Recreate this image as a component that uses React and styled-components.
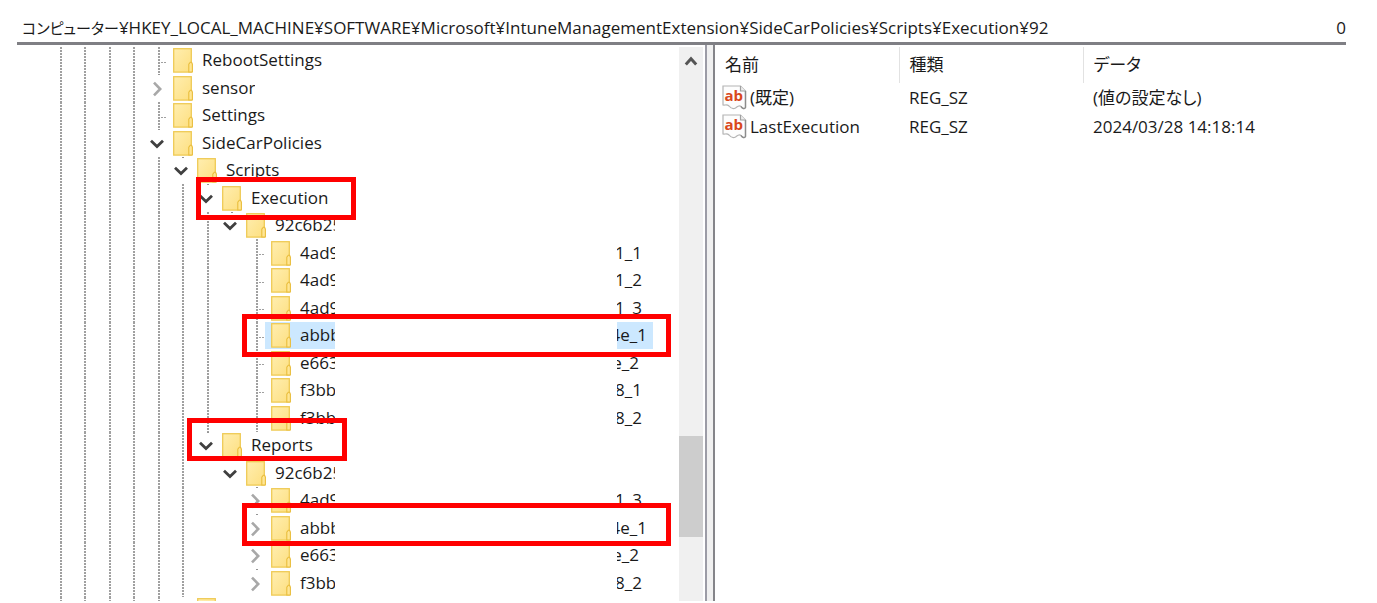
import React, { useState } from "react";
import styled, { createGlobalStyle } from "styled-components";

const TREE = [
  { level: 4, lines: 4, name: "RebootSettings" },
  { level: 4, lines: 4, name: "sensor", toggle: "closed" },
  { level: 4, lines: 4, name: "Settings" },
  { level: 4, lines: 4, name: "SideCarPolicies", toggle: "open" },
  { level: 5, lines: 5, name: "Scripts", toggle: "open" },
  { level: 6, lines: 6, name: "Execution", toggle: "open" },
  { level: 7, lines: 7, name: "92c6b25", toggle: "open", hidden: true },
  { level: 8, lines: 7, name: "4ad9", hidden: true, tail: "1_1" },
  { level: 8, lines: 7, name: "4ad9", hidden: true, tail: "1_2" },
  { level: 8, lines: 7, name: "4ad9", hidden: true, tail: "1_3" },
  { level: 8, lines: 7, name: "abbb", hidden: true, tail: "4e_1", selected: true },
  { level: 8, lines: 7, name: "e663", hidden: true, tail: "e_2" },
  { level: 8, lines: 7, name: "f3bb", hidden: true, tail: "8_1" },
  { level: 8, lines: 7, name: "f3bb", hidden: true, tail: "8_2" },
  { level: 6, lines: 6, name: "Reports", toggle: "open" },
  { level: 7, lines: 6, name: "92c6b25", toggle: "open", hidden: true },
  { level: 8, lines: 6, name: "4ad9", toggle: "closed", hidden: true, tail: "1_3" },
  { level: 8, lines: 6, name: "abbb", toggle: "closed", hidden: true, tail: "4e_1" },
  { level: 8, lines: 6, name: "e663", toggle: "closed", hidden: true, tail: "e_2" },
  { level: 8, lines: 6, name: "f3bb", toggle: "closed", hidden: true, tail: "8_2" },
  { level: 5, lines: 5, name: "", toggle: "none" },
];

const TAIL_WIDTHS = { "4e_1": 30, e_2: 22 };

const VALUES = [
  { name: "(既定)", type: "REG_SZ", data: "(値の設定なし)" },
  { name: "LastExecution", type: "REG_SZ", data: "2024/03/28 14:18:14" },
];

const FolderIcon = () => (
  <svg width="20" height="25" viewBox="0 0 20 25" aria-hidden="true">
    <defs>
      <linearGradient id="folder" x1="0" y1="0" x2="1" y2="1">
        <stop offset="0" stopColor="#ffeeb0" />
        <stop offset="1" stopColor="#fddf80" />
      </linearGradient>
    </defs>
    <rect x="0.7" y="0.7" width="17.6" height="23.4" fill="url(#folder)" stroke="#efca55" strokeWidth="1.3" />
    <path d="M15.8 24V16.2L17.3 14.2H18.6L19.4 16.2V24Z" fill="#ffe694" stroke="#e9bd3c" strokeWidth="1.1" />
  </svg>
);

const ToggleIcon = ({ open }) => (
  <svg width="16" height="16" viewBox="0 0 16 16" fill="none" aria-hidden="true">
    {open ? (
      <path d="M2 4.8L8 10.6L14 4.8" stroke="#404040" strokeWidth="2.8" />
    ) : (
      <path d="M5 1.6L11.2 8L5 14.4" stroke="#a8a8a8" strokeWidth="2.6" />
    )}
  </svg>
);

const StringIcon = () => (
  <svg width="25" height="25" viewBox="0 0 25 25" aria-hidden="true">
    <path
      d="M1 20V1H18.5L23.5 6V22.5C22.5 24.5 20.5 23.5 19 21.5C17 19.5 15 22 13.5 23C11 24.5 9 23.5 7 21C5 19 3 20.5 1 20Z"
      fill="#fdfdfd"
      stroke="#b4b4b4"
      strokeWidth="1.2"
    />
    <path d="M18.5 1V6H23.5" fill="#eee" stroke="#a0a0a0" strokeWidth="1.2" />
    <path d="M23.5 6V22.5C22.5 24.5 20.5 23.5 19 21.5" fill="none" stroke="#8c8c8c" strokeWidth="1.4" />
    <text x="2.5" y="15.5" fontFamily="Open Sans, sans-serif" fontSize="15" fontWeight="700" fill="#d9481c">
      ab
    </text>
  </svg>
);

const TreeRow = ({ item, onToggle }) => {
  const { level, lines, name, toggle, hidden, tail, selected } = item;
  return (
    <Row role="treeitem" aria-selected={!!selected}>
      {Array.from({ length: level }, (_, i) => (
        <Guide key={i} $line={i < lines} />
      ))}
      {toggle === "none" && <Branch />}
      {!toggle && <Branch $connector />}
      {(toggle === "open" || toggle === "closed") && (
        <Toggle type="button" aria-label={name} onClick={onToggle}>
          <ToggleIcon open={toggle === "open"} />
        </Toggle>
      )}
      <Label $selected={selected} $width={hidden ? (level === 8 ? 70 : 95) : null}>
        <FolderIcon />
        <Name>{name}</Name>
      </Label>
      {tail && (
        <Tail $selected={selected} $width={TAIL_WIDTHS[tail] || 25}>
          <Name>{tail}</Name>
        </Tail>
      )}
    </Row>
  );
};

const App = () => {
  const [items, setItems] = useState(TREE);

  const handleToggle = (index) => {
    setItems(
      items.map((item, i) =>
        i === index
          ? { ...item, toggle: item.toggle === "open" ? "closed" : "open" }
          : item
      )
    );
  };

  return (
    <>
      <GlobalStyle />
      <Window>
        <AddressBar>
          <AddressLabel htmlFor="address">コンピューター</AddressLabel>
          <AddressInput
            id="address"
            defaultValue="¥HKEY_LOCAL_MACHINE¥SOFTWARE¥Microsoft¥IntuneManagementExtension¥SideCarPolicies¥Scripts¥Execution¥92"
          />
          <AddressEnd>0</AddressEnd>
        </AddressBar>
        <Panes>
          <TreePane>
            <Tree role="tree">
              {items.map((item, i) => (
                <TreeRow key={i} item={item} onToggle={() => handleToggle(i)} />
              ))}
            </Tree>
            <Scrollbar>
              <ScrollButton type="button" aria-label="上へ">
                <svg width="14" height="12" viewBox="0 0 14 12" fill="none">
                  <path d="M1.8 9.4L7 3.8L12.2 9.4" stroke="#555" strokeWidth="3" />
                </svg>
              </ScrollButton>
              <Thumb />
            </Scrollbar>
            <Mark $left={179} $top={132} $width={160} />
            <Mark $left={225} $top={269} $width={429} />
            <Mark $left={170} $top={373} $width={160} />
            <Mark $left={225} $top={458} $width={429} />
          </TreePane>
          <Splitter />
          <ValuePane>
            <ValueTable>
              <colgroup>
                <ValueCol />
                <ValueCol />
                <col />
              </colgroup>
              <thead>
                <tr>
                  <HeadCell>名前</HeadCell>
                  <HeadCell>種類</HeadCell>
                  <HeadCell>データ</HeadCell>
                </tr>
              </thead>
              <tbody>
                {VALUES.map((value) => (
                  <tr key={value.name}>
                    <Cell>
                      <ValueName>
                        <StringIcon />
                        {value.name}
                      </ValueName>
                    </Cell>
                    <Cell>{value.type}</Cell>
                    <Cell>{value.data}</Cell>
                  </tr>
                ))}
              </tbody>
            </ValueTable>
          </ValuePane>
        </Panes>
      </Window>
    </>
  );
};

export default App;

const GlobalStyle = createGlobalStyle`
  * {
    box-sizing: border-box;
  }

  body {
    margin: 0;
    background: #fff;
    color: #1a1a1a;
    font-family: "Open Sans", "Noto Sans CJK JP", sans-serif;
    font-size: 17px;
    font-feature-settings: "palt";
  }

  button,
  input {
    font: inherit;
    color: inherit;
    border: none;
    padding: 0;
    background: none;
  }
`;

const Window = styled.div`
  display: flex;
  flex-direction: column;
  height: 100vh;
  padding: 14px 31px 2px 17px;
  overflow: hidden;
`;

const AddressBar = styled.div`
  display: flex;
  align-items: center;
  height: 28px;
  padding: 0 0 2px 5px;
`;

const AddressLabel = styled.label`
  font-size: 15px;
  white-space: nowrap;
`;

const AddressInput = styled.input`
  flex: 0 1 944px;
  min-width: 0;
  height: 26px;
  outline: none;
`;

const AddressEnd = styled.span`
  margin-left: auto;
`;

const Panes = styled.div`
  display: flex;
  flex: 1;
  min-height: 0;
  border-top: 3px solid #7f7f84;
`;

const TreePane = styled.div`
  position: relative;
  display: flex;
  flex: 0 0 690px;
  padding: 2px 2px 0 31px;
  border-right: 2px solid #9c9ca6;
  overflow: hidden;
`;

const Tree = styled.ul`
  flex: 1;
  display: grid;
  grid-auto-rows: 27px 28px;
  margin: 0;
  padding: 0;
  list-style: none;
`;

const Row = styled.li`
  display: flex;
  white-space: nowrap;
`;

const dots = "#a0a0a0 0 2px, transparent 2px 3px";

const Guide = styled.span`
  flex: none;
  width: 24px;
  background: ${({ $line }) =>
    $line
      ? `repeating-linear-gradient(${dots}) 12px 0 / 2px 100% no-repeat`
      : "none"};

  &:nth-child(even) {
    width: 25px;
  }
`;

const Branch = styled.span`
  flex: none;
  width: 21px;
  background: ${({ $connector }) =>
    $connector
      ? `repeating-linear-gradient(${dots}) 12px 0 / 2px 100% no-repeat,
         repeating-linear-gradient(90deg, ${dots}) 12px 15px / 9px 1px no-repeat`
      : "none"};
`;

const Toggle = styled.button`
  flex: none;
  display: flex;
  align-items: center;
  width: 21px;
  padding: 1px 0 0 3px;
  background: linear-gradient(#949494, #949494) 12px 0 / 2px 1px no-repeat;
  cursor: pointer;
`;

const Label = styled.span`
  display: flex;
  align-items: center;
  flex: none;
  gap: 9px;
  width: ${({ $width }) => ($width ? `${$width}px` : "auto")};
  padding-left: 6px;
  overflow: hidden;
  background: ${({ $selected }) => ($selected ? "#cce8ff" : "none")};

  svg {
    flex: none;
  }
`;

const Name = styled.span`
  padding-bottom: 2px;
`;

const Tail = styled.span`
  display: flex;
  align-items: center;
  justify-content: flex-end;
  box-sizing: content-box;
  width: ${({ $width }) => $width}px;
  margin-left: 282px;
  padding-right: 6px;
  overflow: hidden;
  background: ${({ $selected }) => ($selected ? "#cce8ff" : "none")};
`;

const Scrollbar = styled.div`
  flex: 0 0 24px;
  background: #f0f0f0;
`;

const ScrollButton = styled.button`
  display: flex;
  align-items: center;
  justify-content: center;
  width: 24px;
  height: 28px;
`;

const Thumb = styled.div`
  height: 101px;
  margin-top: 361px;
  background: #cdcdcd;
`;

const Mark = styled.div`
  position: absolute;
  left: ${({ $left }) => $left}px;
  top: ${({ $top }) => $top}px;
  width: ${({ $width }) => $width}px;
  height: 43px;
  border: 5px solid #ff0000;
  pointer-events: none;
`;

const Splitter = styled.div`
  flex: 0 0 6px;
  background: #f0f0f0;
`;

const ValuePane = styled.div`
  flex: 1;
  min-width: 0;
  padding-top: 2px;
  border-left: 2px solid #85858a;
`;

const ValueTable = styled.table`
  width: 100%;
  table-layout: fixed;
  border-collapse: collapse;
`;

const ValueCol = styled.col`
  width: 184px;
`;

const HeadCell = styled.th`
  height: 36px;
  padding: 0 10px 4px;
  border-right: 1px solid #e2e2e2;
  font-weight: 400;
  text-align: left;

  &:last-child {
    border-right: none;
  }
`;

const Cell = styled.td`
  height: 29px;
  padding: 0 10px;
  line-height: 29px;
  white-space: nowrap;
`;

const ValueName = styled.div`
  display: flex;
  align-items: center;
  gap: 3px;
  height: 29px;
  margin-left: -3px;
`;
